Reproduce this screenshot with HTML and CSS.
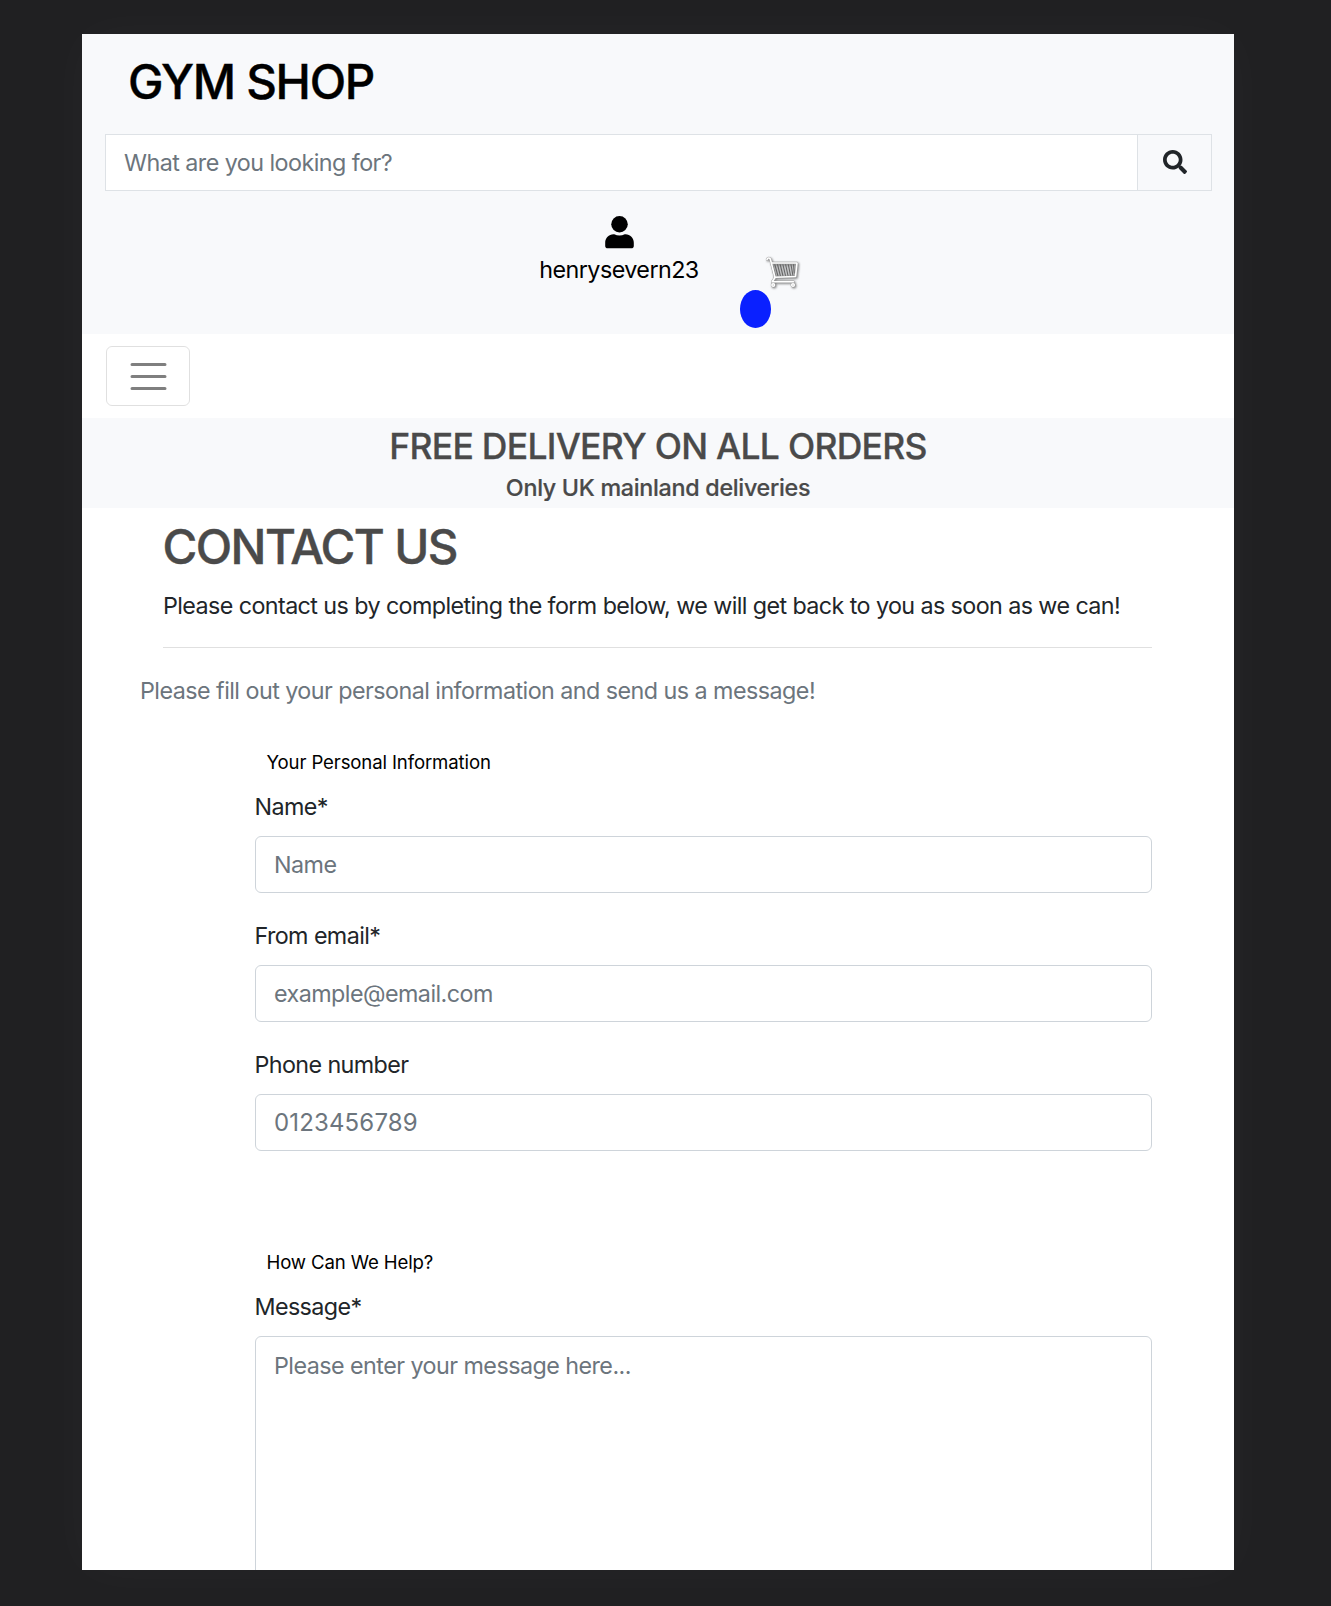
FILE: index.html
```html
<!DOCTYPE html>
<html lang="en">
<head>
<meta charset="utf-8">
<title>Gym Shop - Contact Us</title>
<link rel="stylesheet" href="styles.css">
</head>
<body>
<div class="page">
  <header class="header">
    <h1 class="logo">GYM SHOP</h1>
    <form class="search">
      <input class="search-input" type="text" placeholder="What are you looking for?">
      <button class="search-button" type="button" aria-label="Search">
        <svg width="24" height="24" viewBox="0 0 512 512"><path fill="currentColor" d="M505 442.700L405.300 343c-4.500-4.500-10.600-7-17-7H372c27.600-35.300 44-79.700 44-128C416 93.100 322.900 0 208 0S0 93.100 0 208s93.100 208 208 208c48.300 0 92.700-16.400 128-44v16.300c0 6.400 2.500 12.500 7 17l99.700 99.700c9.400 9.400 24.600 9.400 33.900 0l28.300-28.300c9.400-9.400 9.400-24.600.100-34zM208 336c-70.700 0-128-57.200-128-128 0-70.700 57.200-128 128-128 70.700 0 128 57.200 128 128 0 70.700-57.200 128-128 128z"/></svg>
      </button>
    </form>
    <div class="links">
      <a class="account">
        <svg width="29" height="33" viewBox="0 0 29 33"><circle cx="14.500" cy="8.250" r="8.250"/><path d="M8.500 18.200h.8c1.600.8 3.300 1.200 5.200 1.200s3.600-.4 5.200-1.200h.8c4.700 0 8.300 3.800 8.300 8.500v3.200c0 1.400-1.100 2.400-2.500 2.400H2.700c-1.400 0-2.500-1-2.500-2.400v-3.200c0-4.700 3.600-8.500 8.300-8.500z"/></svg>
        <span>henrysevern23</span>
      </a>
      <a class="cart" aria-label="Cart">
        <svg class="cart-icon" width="36" height="36" viewBox="0 0 36 36" fill="none" stroke-linecap="round" stroke-linejoin="round">
          <g stroke="#666" stroke-width="1.100">
            <path d="M8 10l3.500 12M10.700 10l3.300 12M13.400 10l3 12M16.100 10l2.900 12M18.800 10l2.800 12M21.500 10l2.600 12M24.200 10l2.400 12M26.900 10l2 11.500M29.500 10l.8 9"/>
          </g>
          <g stroke="#999" stroke-width="2.300">
            <path d="M3 5.500c.4-1.700 2.400-2 3.300-.5L11 23.500l-2.800 4.200H29.500M7 9H33l-1.500 13.500-20.500.8"/>
            <circle cx="9.200" cy="31" r="1.300"/><circle cx="29" cy="31" r="1.300"/>
          </g>
          <g stroke="#fff" stroke-width="1.600">
            <path d="M3 5.500c.4-1.700 2.400-2 3.300-.5L11 23.500l-2.800 4.200H29.500M7 9H33l-1.500 13.500-20.500.8"/>
            <circle cx="9.200" cy="31" r="1.300"/><circle cx="29" cy="31" r="1.300"/>
          </g>
        </svg>
        <span class="cart-badge"></span>
      </a>
    </div>
  </header>
  <nav class="nav">
    <button class="toggler" type="button" aria-label="Menu">
      <svg width="45" height="45" viewBox="0 0 30 30"><path stroke="rgba(0,0,0,.5)" stroke-width="2" stroke-linecap="round" d="M4 7h22M4 15h22M4 23h22"/></svg>
    </button>
  </nav>
  <section class="banner">
    <h2 class="banner-title">FREE DELIVERY ON ALL ORDERS</h2>
    <p class="banner-note">Only UK mainland deliveries</p>
  </section>
  <main class="main">
    <div class="intro">
      <h2 class="title">CONTACT US</h2>
      <p class="lead">Please contact us by completing the form below, we will get back to you as soon as we can!</p>
    </div>
    <p class="hint">Please fill out your personal information and send us a message!</p>
    <form class="form">
      <fieldset class="group">
        <legend class="legend">Your Personal Information</legend>
        <div class="field">
          <label class="label" for="name">Name*</label>
          <input class="control" id="name" type="text" placeholder="Name">
        </div>
        <div class="field">
          <label class="label" for="email">From email*</label>
          <input class="control" id="email" type="text" placeholder="example@email.com">
        </div>
        <div class="field">
          <label class="label" for="phone">Phone number</label>
          <input class="control phone" id="phone" type="text" placeholder="0123456789">
        </div>
      </fieldset>
      <fieldset class="group">
        <legend class="legend">How Can We Help?</legend>
        <div class="field">
          <label class="label" for="message">Message*</label>
          <textarea class="control message" id="message" placeholder="Please enter your message here..."></textarea>
        </div>
      </fieldset>
    </form>
  </main>
</div>
</body>
</html>
```
FILE: styles.css
```css
* { box-sizing: border-box; }
html { background: #202022; }
body {
  margin: 0;
  height: 1606px;
  padding: 34px 97px 36px 82px;
  overflow: hidden;
  font-family: Inter, "Liberation Sans", sans-serif;
  font-size: 23.3px;
  line-height: 36px;
  letter-spacing: -.54px;
  color: #212529;
}
h1, h2, p { margin: 0; font-weight: 400; }
input, textarea, button { font: inherit; letter-spacing: inherit; color: inherit; margin: 0; outline: 0; }
svg { display: block; }
::placeholder { color: #6c757d; opacity: 1; }

.page {
  height: 1536px;
  overflow: hidden;
  background: #fff;
  box-shadow: 0 0 50px rgba(255, 255, 255, .03);
}

.header { height: 300px; padding: 19px 22px 0; background: #f8f9fb; }
.logo {
  padding-left: 24px;
  font-size: 47.5px;
  line-height: 58px;
  font-weight: 500;
  letter-spacing: -1.3px;
  -webkit-text-stroke: .4px;
  color: #000;
}
.search { display: flex; height: 57px; margin: 23px 0 0 .5px; }
.search-input {
  flex: 1;
  min-width: 0;
  padding: 0 18.5px;
  border: 1px solid #dee2e6;
  background: #fff;
}
.search-button {
  display: flex;
  align-items: center;
  justify-content: center;
  width: 75px;
  margin-left: -1px;
  padding: 0 0 2px;
  border: 1px solid #dee2e6;
  background: #f8f9fb;
}
.links { display: flex; padding: 25px 0 0 435px; }
.account {
  display: flex;
  flex-direction: column;
  align-items: center;
  width: 160px;
  color: #000;
  gap: 3px;
}
.cart { display: flex; flex-direction: column; width: 60px; margin-left: 41px; padding-top: 38px; }
.cart-icon { align-self: flex-end; filter: drop-shadow(1px 1px 1px rgba(0, 0, 0, .5)); }
.cart-badge { width: 31px; height: 38px; border-radius: 50%; background: #0a20ff; }

.nav { display: flex; align-items: center; height: 84px; padding-left: 24px; background: #fff; }
.toggler {
  display: flex;
  align-items: center;
  justify-content: center;
  width: 84px;
  height: 60px;
  padding: 0;
  border: 1px solid rgba(0, 0, 0, .12);
  border-radius: 6px;
  background: none;
}

.banner { height: 90px; padding-top: 7px; text-align: center; background: #f8f9fb; color: #4a4a4a; }
.banner-title { font-size: 35.5px; line-height: 43px; font-weight: 500; letter-spacing: -.74px; -webkit-text-stroke: .3px; }
.banner-note { margin-top: 2px; line-height: 36px; font-weight: 500; letter-spacing: -.3px; -webkit-text-stroke: .2px; }

.main { padding: 10px 82px 0 57px; }
.intro { margin-left: 24px; padding-bottom: 23px; border-bottom: 1px solid #e0e0e0; }
.title {
  margin-left: -.5px;
  font-size: 47.5px;
  line-height: 58px;
  font-weight: 500;
  letter-spacing: -1.6px;
  -webkit-text-stroke: .4px;
  color: #4a4a4a;
}
.lead { margin-top: 12px; letter-spacing: -.59px; white-space: nowrap; }
.hint { margin-top: 25px; padding-left: 1px; color: #6c757d; }

.form { margin: 38px 0 0 115.5px; }
.group { min-width: 0; margin: 0 0 71px; padding: 0; border: 0; }
.legend { display: block; padding: 0 0 0 12px; margin-bottom: 12px; font-size: 18.6px; line-height: 30px; letter-spacing: -.13px; color: #000; }
.field { margin-bottom: 25px; }
.label { display: block; margin-bottom: 11px; letter-spacing: -.6px; }
.control {
  display: block;
  width: 100%;
  height: 57px;
  padding: 9px 18.5px;
  border: 1px solid #ced4da;
  border-radius: 6px;
  background: #fff;
}
.phone { font-size: 24px; letter-spacing: .15px; }
.message { height: 380px; padding-top: 11px; resize: none; }
```
